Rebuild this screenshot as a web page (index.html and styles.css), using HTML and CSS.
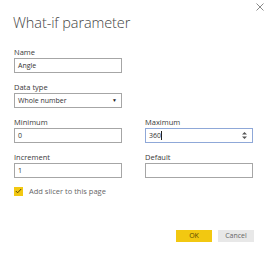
FILE: index.html
```html
<!DOCTYPE html>
<html lang="en">
<head>
    <meta charset="UTF-8">
    <title>What-if parameter</title>
    <link rel="stylesheet" href="styles.css">
</head>
<body>
    <div class="dialog">
        <button class="close-btn" aria-label="Close">
            <svg width="8" height="8" viewBox="0 0 8 8"><path d="M0.5 0.5 L7.5 7.5 M7.5 0.5 L0.5 7.5" stroke="#8a8a8a" stroke-width="1"/></svg>
        </button>

        <h1 class="title">What-if parameter</h1>

        <div class="form-grid">
            <div class="field">
                <label>Name</label>
                <div class="input">Angle</div>
            </div>
            <div></div>

            <div class="field">
                <label>Data type</label>
                <div class="input select">
                    <span>Whole number</span>
                    <span class="arrow">▼</span>
                </div>
            </div>
            <div></div>

            <div class="field">
                <label>Minimum</label>
                <div class="input">0</div>
            </div>
            <div class="field">
                <label>Maximum</label>
                <div class="input focused">
                    <span>360<span class="caret"></span></span>
                    <svg class="spinner" width="5" height="7" viewBox="0 0 5 7"><path d="M2.5 0 L5 2.5 L0 2.5 Z M2.5 7 L5 4.5 L0 4.5 Z" fill="#555"/></svg>
                </div>
            </div>

            <div class="field">
                <label>Increment</label>
                <div class="input">1</div>
            </div>
            <div class="field">
                <label>Default</label>
                <div class="input"></div>
            </div>
        </div>

        <div class="check-row">
            <span class="checkbox">
                <svg width="7" height="6" viewBox="0 0 7 6"><path d="M0.8 3 L2.6 4.8 L6.2 1" stroke="#5a4a00" stroke-width="1" fill="none"/></svg>
            </span>
            <span>Add slicer to this page</span>
        </div>

        <div class="footer">
            <button class="btn btn-ok">OK</button>
            <button class="btn btn-cancel">Cancel</button>
        </div>
    </div>
</body>
</html>
```

FILE: styles.css
```css
* {
    box-sizing: border-box;
    margin: 0;
    padding: 0;
}

body {
    font-family: 'Open Sans', 'Noto Sans', sans-serif;
    background-color: #ffffff;
    color: #333;
    width: 269px;
    height: 253px;
    overflow: hidden;
}

.dialog {
    position: relative;
    height: 253px;
    padding: 12px 15px 0 13px;
}

.close-btn {
    position: absolute;
    top: 2px;
    right: 4px;
    background: none;
    border: none;
    width: 10px;
    height: 10px;
    display: flex;
    align-items: center;
    justify-content: center;
}

.title {
    font-weight: 300;
    font-size: 14.5px;
    line-height: 21px;
    color: #444;
    letter-spacing: -0.1px;
    margin-bottom: 13px;
}

.form-grid {
    display: grid;
    grid-template-columns: 108px 108px;
    column-gap: 23px;
    row-gap: 8px;
    margin-left: 1px;
}

.field label {
    display: block;
    font-size: 7.5px;
    line-height: 12px;
    color: #3a3a3a;
}

.input {
    height: 15px;
    border: 1px solid #a6a6a6;
    font-size: 7px;
    line-height: 13px;
    padding: 0 3px;
    color: #333;
    display: flex;
    align-items: center;
    justify-content: space-between;
}

.select .arrow {
    font-size: 5px;
    color: #222;
    margin-right: 1px;
}

.focused {
    border-color: #8fa8d8;
}

.caret {
    display: inline-block;
    width: 1px;
    height: 9px;
    background: #222;
    vertical-align: -2px;
}

.spinner {
    margin-right: 2px;
}

.check-row {
    display: flex;
    align-items: center;
    gap: 6px;
    margin-top: 8px;
    margin-left: 1px;
    font-size: 7.5px;
    color: #666;
}

.checkbox {
    width: 9px;
    height: 9px;
    background: #f2c811;
    display: flex;
    align-items: center;
    justify-content: center;
}

.footer {
    display: flex;
    justify-content: flex-end;
    gap: 6px;
    margin-top: 34px;
}

.btn {
    width: 36px;
    height: 12px;
    border: none;
    font-family: inherit;
    font-size: 7px;
    line-height: 12px;
    color: #444;
}

.btn-ok {
    background: #f2c811;
    color: #5a4a00;
}

.btn-cancel {
    background: #e8e8e8;
    color: #666;
}
```
